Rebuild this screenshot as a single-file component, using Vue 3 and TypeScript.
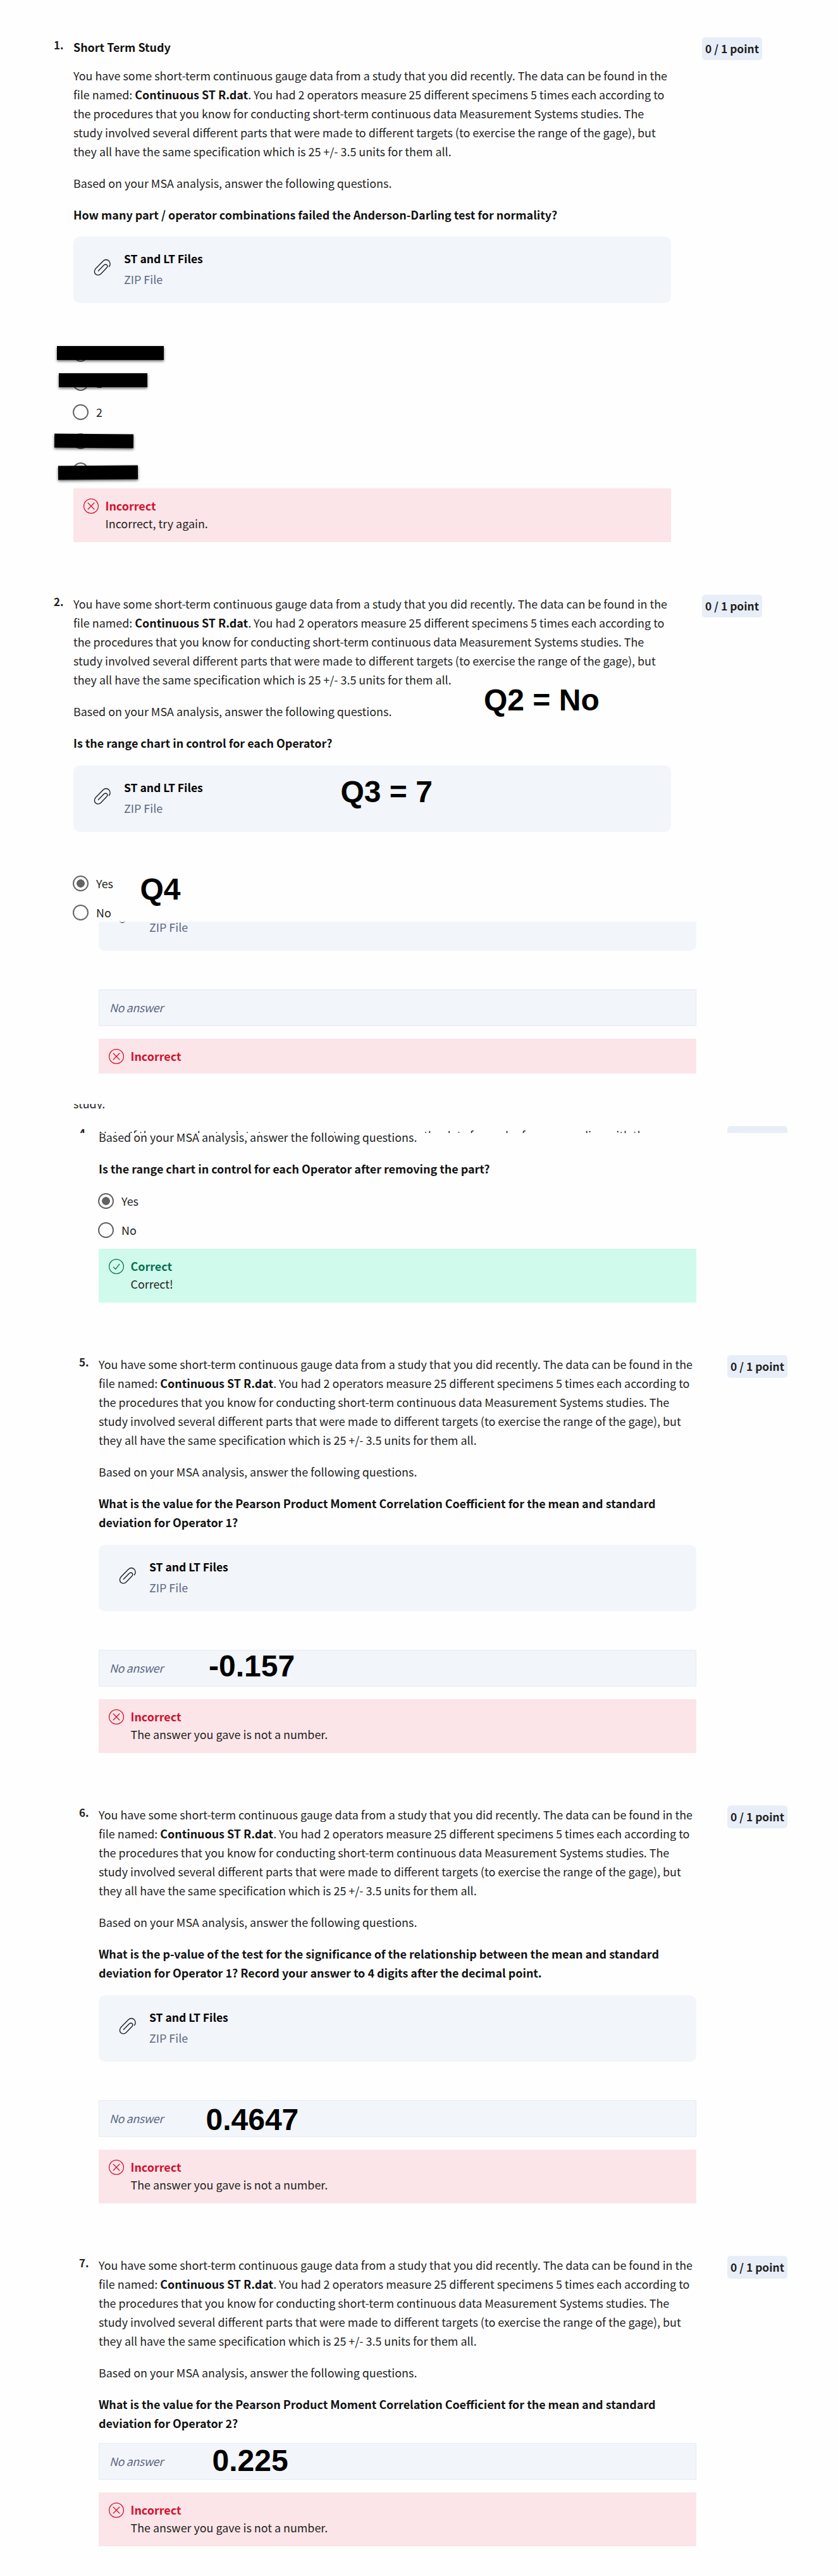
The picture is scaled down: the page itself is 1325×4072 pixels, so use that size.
<script setup lang="ts">
interface NumericQuestion {
  id: number
  prompt: string[]
  file: boolean
  note: string
}

const intro = {
  first: 'You have some short-term continuous gauge data from a study that you did recently. The data can be found in the',
  rest: [
    'the procedures that you know for conducting short-term continuous data Measurement Systems studies. The',
    'study involved several different parts that were made to different targets (to exercise the range of the gage), but',
    'they all have the same specification which is 25 +/- 3.5 units for them all.',
  ],
}
const based = 'Based on your MSA analysis, answer the following questions.'

const numeric: NumericQuestion[] = [
  {
    id: 5,
    prompt: ['What is the value for the Pearson Product Moment Correlation Coefficient for the mean and standard', 'deviation for Operator 1?'],
    file: true,
    note: '-0.157',
  },
  {
    id: 6,
    prompt: ['What is the p-value of the test for the significance of the relationship between the mean and standard', 'deviation for Operator 1? Record your answer to 4 digits after the decimal point.'],
    file: true,
    note: '0.4647',
  },
  {
    id: 7,
    prompt: ['What is the value for the Pearson Product Moment Correlation Coefficient for the mean and standard', 'deviation for Operator 2?'],
    file: false,
    note: '0.225',
  },
]

const firstOptions: string[] = ['', '1', '2', '', '']
</script>

<template>
  <svg class="defs" width="0" height="0" aria-hidden="true">
    <symbol id="clip" viewBox="0 0 27 27">
      <path d="M24.4 12.6C26.8 10 26.6 6 24.2 3.4C21.6 .8 17.8 .8 15.2 3.4L3.4 15.6C.9 18.2 .7 22 3 24.3C5.3 26.6 9 26.3 11.4 23.9L20.5 14.5C22 12.9 22.1 11 20.9 9.8C19.6 8.5 17.7 8.7 16.2 10.2L7.4 19.3" fill="none" stroke="#1f1f1f" stroke-width="1.4" stroke-linecap="round" />
    </symbol>
    <symbol id="cross" viewBox="0 0 26 26">
      <g fill="none" stroke="currentColor" stroke-width="1.25">
        <circle cx="13" cy="13" r="11.4" />
        <path d="M7.8 7.8L18.2 18.2M18.2 7.8L7.8 18.2" />
      </g>
    </symbol>
    <symbol id="tick" viewBox="0 0 26 26">
      <g fill="none" stroke="currentColor" stroke-width="1.25">
        <circle cx="13" cy="13" r="11.4" />
        <path d="M8 13.6L11.7 17.2L18.2 8.8" />
      </g>
    </symbol>
  </svg>

  <main class="page">
    <section class="question q1">
      <span class="num">1.</span>
      <div class="body">
        <p class="strong title">Short Term Study</p>
        <p class="para">
          {{ intro.first }}<br />file named: <b>Continuous ST R.dat</b>. You had 2 operators measure 25 different specimens 5 times each according to
          <template v-for="l in intro.rest" :key="l"><br />{{ l }}</template>
        </p>
        <p class="para">{{ based }}</p>
        <p class="para strong">How many part / operator combinations failed the Anderson-Darling test for normality?</p>
        <div class="file">
          <svg class="clip"><use href="#clip" /></svg>
          <div><p class="fname">ST and LT Files</p><p class="ftype">ZIP File</p></div>
        </div>
        <div class="options">
          <div v-for="(o, i) in firstOptions" :key="i" class="option"><i class="radio"></i><span>{{ o }}</span></div>
          <i v-for="n in 4" :key="n" class="bar" :class="'bar' + n"></i>
        </div>
        <div class="feedback bad">
          <svg><use href="#cross" /></svg>
          <div><p class="verdict">Incorrect</p><p>Incorrect, try again.</p></div>
        </div>
      </div>
      <span class="points">0 / 1 point</span>
    </section>

    <section class="question q2">
      <span class="num">2.</span>
      <div class="body">
        <p class="para">
          {{ intro.first }}<br />file named: <b>Continuous ST R.dat</b>. You had 2 operators measure 25 different specimens 5 times each according to
          <template v-for="l in intro.rest" :key="l"><br />{{ l }}</template>
        </p>
        <p class="para">{{ based }}</p>
        <p class="para strong">Is the range chart in control for each Operator?</p>
        <div class="file">
          <svg class="clip"><use href="#clip" /></svg>
          <div><p class="fname">ST and LT Files</p><p class="ftype">ZIP File</p></div>
          <span class="note note-q3">Q3 = 7</span>
        </div>
        <div class="options">
          <div class="option"><i class="radio on"></i><span>Yes</span></div>
          <div class="option"><i class="radio"></i><span>No</span></div>
          <span class="note note-q4">Q4</span>
        </div>
        <span class="note note-q2">Q2 = No</span>
      </div>
      <span class="points">0 / 1 point</span>
    </section>

    <section class="question shifted q3">
      <div class="body">
        <div class="file cut">
          <div><p class="ftype">ZIP File</p></div>
          <i class="hook"></i>
        </div>
        <div class="answer">No answer</div>
        <div class="feedback bad short">
          <svg><use href="#cross" /></svg>
          <div><p class="verdict">Incorrect</p></div>
        </div>
      </div>
    </section>

    <div class="sliver"><p>study.</p></div>

    <section class="question shifted q4-head">
      <span class="num">4.</span>
      <div class="body">
        <p class="q4-line">
          <span>Note: If the range chart points to any one part</span>
          <span>the data for each of corresponding with the</span>
        </p>
      </div>
      <span class="points">0 / 1 point</span>
    </section>

    <section class="question shifted q4">
      <div class="body">
        <p class="para">{{ based }}</p>
        <p class="para strong">Is the range chart in control for each Operator after removing the part?</p>
        <div class="options">
          <div class="option"><i class="radio on"></i><span>Yes</span></div>
          <div class="option"><i class="radio"></i><span>No</span></div>
        </div>
        <div class="feedback good">
          <svg><use href="#tick" /></svg>
          <div><p class="verdict">Correct</p><p>Correct!</p></div>
        </div>
      </div>
    </section>

    <section v-for="q in numeric" :key="q.id" class="question shifted numeric">
      <span class="num">{{ q.id }}.</span>
      <div class="body">
        <p class="para">
          {{ intro.first }}<br />file named: <b>Continuous ST R.dat</b>. You had 2 operators measure 25 different specimens 5 times each according to
          <template v-for="l in intro.rest" :key="l"><br />{{ l }}</template>
        </p>
        <p class="para">{{ based }}</p>
        <p class="para strong">{{ q.prompt[0] }}<br />{{ q.prompt[1] }}</p>
        <div v-if="q.file" class="file">
          <svg class="clip"><use href="#clip" /></svg>
          <div><p class="fname">ST and LT Files</p><p class="ftype">ZIP File</p></div>
        </div>
        <div class="answer" :class="{ close: !q.file }">
          No answer
          <span class="note" :class="'note-a' + q.id">{{ q.note }}</span>
        </div>
        <div class="feedback bad">
          <svg><use href="#cross" /></svg>
          <div><p class="verdict">Incorrect</p><p>The answer you gave is not a number.</p></div>
        </div>
      </div>
      <span class="points">0 / 1 point</span>
    </section>
  </main>
</template>

<style>
body {
  margin: 0;
  background: #fefefe;
}
</style>

<style scoped>
.defs {
  position: absolute;
}
.page {
  box-sizing: border-box;
  width: 1325px;
  height: 4072px;
  padding-top: 59px;
  overflow: hidden;
  background: #fefefe;
  color: #1f1f1f;
  font-family: 'Noto Sans CJK SC', 'Noto Sans', sans-serif;
  font-size: 17.9px;
  line-height: 30px;
  white-space: nowrap;
}
p {
  margin: 0;
}
.question {
  display: grid;
  grid-template-columns: 31px 945px 49px 95px;
  grid-template-areas: 'num body gap points';
  align-items: start;
  margin-left: 85px;
}
.shifted {
  margin-left: 125px;
}
.num {
  grid-area: num;
  margin-top: -3px;
  font-weight: 700;
  font-size: 17px;
}
.body {
  grid-area: body;
  position: relative;
}
.points {
  grid-area: points;
  margin-top: 1px;
  height: 36px;
  line-height: 36px;
  border-radius: 5px;
  background: #e8eef7;
  text-align: center;
  font-weight: 700;
  font-size: 17.4px;
}
.q1 .points {
  margin-top: 0;
}
.para + .para {
  margin-top: 20px;
}
.title {
  margin-bottom: 15px;
}
.strong,
b {
  font-weight: 700;
  color: #111;
}
.file {
  position: relative;
  box-sizing: border-box;
  display: flex;
  height: 105px;
  margin-top: 21px;
  padding: 20px 0 0 32px;
  border-radius: 10px;
  background: #f2f5fa;
}
.q1 .file {
  margin-top: 20px;
}
.clip {
  width: 27px;
  height: 27px;
  margin: 15px 21px 0 0;
}
.fname {
  font-weight: 700;
  color: #000;
  font-size: 17.5px;
}
.ftype {
  margin-top: 2px;
  color: #5b6780;
}
.options {
  position: relative;
  margin-top: 57px;
}
.option {
  display: flex;
  align-items: center;
  height: 46px;
  margin-left: -1px;
}
.option span {
  margin: 0 0 1px 12px;
}
.radio {
  box-sizing: border-box;
  width: 25px;
  height: 25px;
  border: 2.5px solid #636363;
  border-radius: 50%;
}
.radio.on {
  background: radial-gradient(circle, #636363 6px, transparent 6.7px);
}
.bar {
  position: absolute;
  height: 22px;
  background: #000;
  box-shadow: 0 2px 4px rgba(0, 0, 0, 0.6);
}
.bar1 {
  left: -26px;
  top: 11px;
  width: 169px;
}
.bar2 {
  left: -23px;
  top: 54px;
  width: 140px;
}
.bar3 {
  left: -30px;
  top: 149.5px;
  width: 125px;
  transform: rotate(0.4deg);
}
.bar4 {
  left: -24px;
  top: 199.5px;
  width: 126px;
  transform: rotate(-0.4deg);
}
.feedback {
  box-sizing: border-box;
  display: flex;
  height: 85px;
  margin-top: 6px;
  padding: 13px 0 0 14.5px;
  line-height: 28px;
}
.feedback svg {
  width: 26px;
  height: 26px;
  margin: 2px 10px 0 0;
}
.feedback.short {
  height: 55px;
}
.verdict {
  font-weight: 700;
}
.bad {
  background: #fbe5e8;
}
.bad svg,
.bad .verdict {
  color: #d30f2d;
}
.good {
  margin-top: 7px;
  background: #d0faec;
}
.good svg,
.good .verdict {
  color: #087051;
}
.q2 {
  margin-top: 82px;
}
.q2 .options {
  margin-top: 58px;
  height: 84px;
}
.cut {
  height: 46px;
  margin-top: 0;
  padding: 0 0 0 80px;
  border-radius: 0 0 10px 10px;
}
.cut .ftype {
  margin-top: -7px;
}
.hook {
  position: absolute;
  left: 33px;
  top: -6px;
  width: 9px;
  height: 8px;
  box-sizing: border-box;
  border-bottom: 1.5px solid #1f1f1f;
  border-radius: 50%;
}
.answer {
  position: relative;
  box-sizing: border-box;
  height: 58px;
  margin-top: 61px;
  padding: 12px 0 0 16px;
  border: 1px solid #e5ebf6;
  background: #f2f5fa;
  color: #5b6780;
  font-style: italic;
  letter-spacing: -0.4px;
}
.answer.close {
  margin-top: 17px;
}
.answer + .feedback {
  margin-top: 20px;
}
.sliver {
  height: 8px;
  margin: 48px 0 0 116px;
  overflow: hidden;
}
.sliver p {
  margin-top: -16px;
}
.q4-head {
  height: 12px;
  margin-top: 26px;
  overflow: hidden;
}
.q4-line {
  display: grid;
  grid-template-columns: 514px 1fr;
}
.q4 {
  margin-top: -9px;
}
.q4 .options {
  margin-top: 13px;
}
.numeric {
  margin-top: 82px;
}
.note {
  position: absolute;
  color: #000;
  font: 700 48px/54px 'Liberation Sans', Arial, sans-serif;
  letter-spacing: 0;
}
.note-q2 {
  left: 649px;
  top: 141px;
}
.note-q3 {
  left: 422.5px;
  top: 15px;
}
.note-q4 {
  left: 105.5px;
  top: 6px;
}
.note-a5 {
  left: 173px;
  top: -2px;
}
.note-a6 {
  left: 168.5px;
  top: 3px;
}
.note-a7 {
  left: 178.5px;
  top: 0;
}
</style>
